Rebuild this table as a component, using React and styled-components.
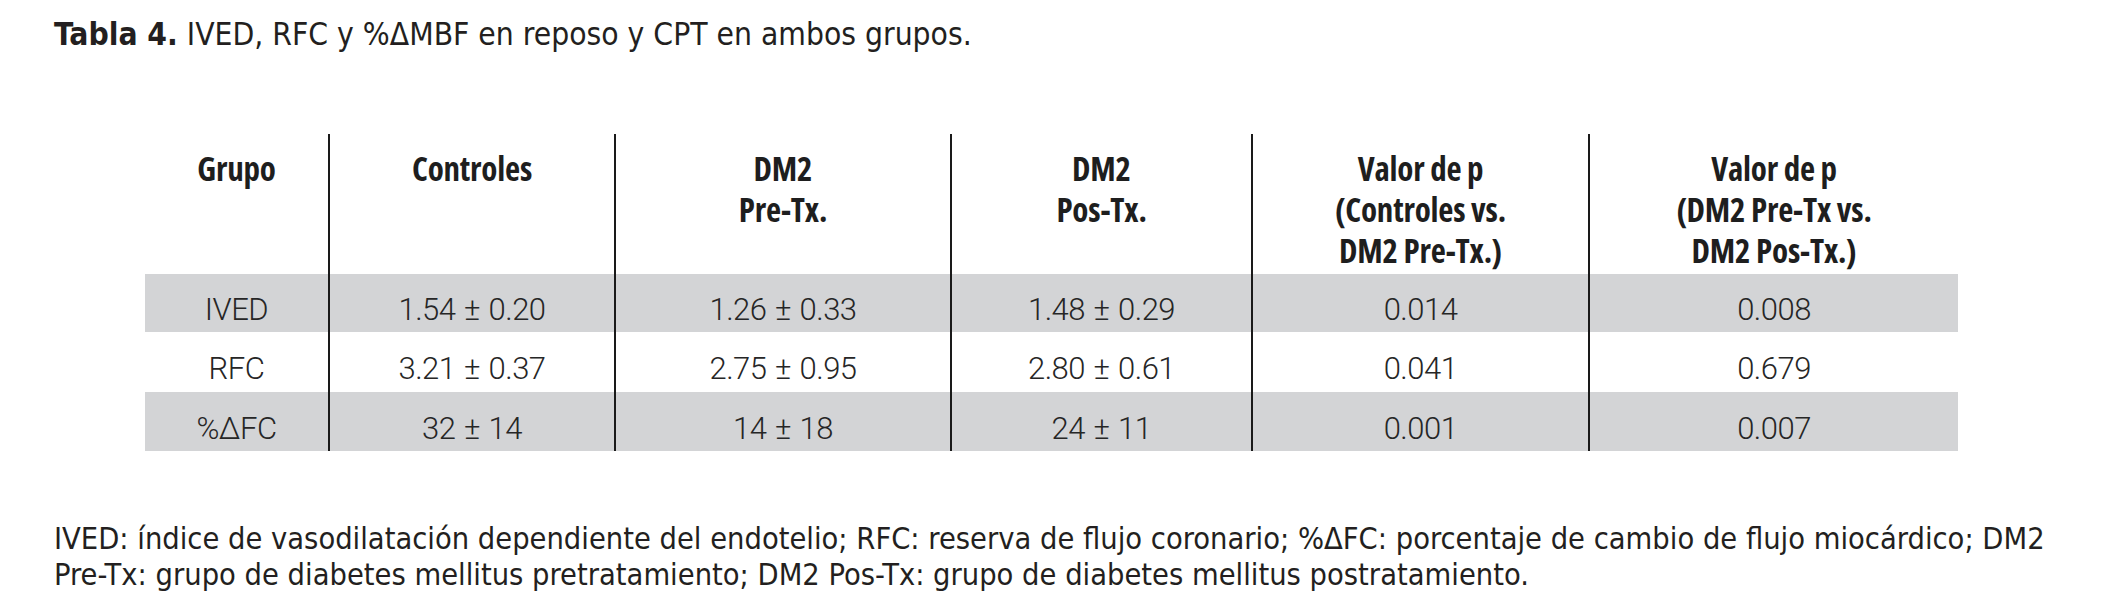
import React from 'react';
import styled, { createGlobalStyle } from 'styled-components';

const GlobalStyle = createGlobalStyle`
  html, body {
    margin: 0;
    padding: 0;
    background: #ffffff;
  }
`;

const Page = styled.div`
  width: 2104px;
  height: 616px;
  padding: 17px 0 0 54px;
  box-sizing: border-box;
  color: #231f20;
  font-family: "DejaVu Sans Condensed", "DejaVu Sans", sans-serif;
`;

const Caption = styled.h1`
  margin: 0;
  font-size: 31.5px;
  line-height: 34px;
  font-weight: normal;

  b {
    font-weight: bold;
  }
`;

const Table = styled.table`
  margin: 83px 0 0 91px;
  border-collapse: collapse;
  table-layout: fixed;
  color: #1e1e1e;
`;

const HeadCell = styled.th`
  width: ${(p) => p.$w}px;
  height: 140px;
  padding: 14px 0 0;
  box-sizing: border-box;
  vertical-align: top;
  text-align: center;
  font-family: "Open Sans", "Liberation Sans", sans-serif;
  font-size: 33px;
  line-height: 41px;
  font-weight: 700;
  font-stretch: 75%;
  letter-spacing: -0.2px;
  border-left: ${(p) => (p.$first ? 'none' : '2px solid #1a1a1a')};
`;

const Row = styled.tr`
  background: ${(p) => (p.$shaded ? '#d3d4d6' : '#ffffff')};
`;

const Cell = styled.td`
  height: ${(p) => p.$h}px;
  padding: 14px 0 0;
  box-sizing: border-box;
  text-align: center;
  vertical-align: middle;
  font-family: Roboto, "Liberation Sans", sans-serif;
  font-size: 31px;
  line-height: 40px;
  font-weight: 300;
  letter-spacing: -0.5px;
  word-spacing: 1.5px;
  color: #262626;
  border-left: ${(p) => (p.$first ? 'none' : '2px solid #1a1a1a')};
`;

const Notes = styled.p`
  margin: 70px 0 0;
  font-size: 30.5px;
  line-height: 36px;
`;

const columns = [
  { w: 184, label: ['Grupo'] },
  { w: 286, label: ['Controles'] },
  { w: 336, label: ['DM2', 'Pre-Tx.'] },
  { w: 301, label: ['DM2', 'Pos-Tx.'] },
  { w: 337, label: ['Valor de p', '(Controles vs.', 'DM2 Pre-Tx.)'] },
  { w: 369, label: ['Valor de p', '(DM2 Pre-Tx vs.', 'DM2 Pos-Tx.)'] },
];

const rows = [
  { h: 58, cells: ['IVED', '1.54 ± 0.20', '1.26 ± 0.33', '1.48 ± 0.29', '0.014', '0.008'] },
  { h: 60, cells: ['RFC', '3.21 ± 0.37', '2.75 ± 0.95', '2.80 ± 0.61', '0.041', '0.679'] },
  { h: 59, cells: ['%ΔFC', '32 ± 14', '14 ± 18', '24 ± 11', '0.001', '0.007'] },
];

export default function App() {
  return (
    <>
      <GlobalStyle />
      <Page>
        <Caption>
          <b>Tabla 4.</b> IVED, RFC y %ΔMBF en reposo y CPT en ambos grupos.
        </Caption>

        <Table>
          <thead>
            <tr>
              {columns.map((col, i) => (
                <HeadCell key={i} $w={col.w} $first={i === 0}>
                  {col.label.map((line, j) => (
                    <div key={j}>{line}</div>
                  ))}
                </HeadCell>
              ))}
            </tr>
          </thead>
          <tbody>
            {rows.map((row, i) => (
              <Row key={i} $shaded={i !== 1}>
                {row.cells.map((value, j) => (
                  <Cell key={j} $h={row.h} $first={j === 0}>
                    {value}
                  </Cell>
                ))}
              </Row>
            ))}
          </tbody>
        </Table>

        <Notes>
          IVED: índice de vasodilatación dependiente del endotelio; RFC: reserva de flujo coronario; %ΔFC: porcentaje de cambio de flujo miocárdico; DM2
          <br />
          Pre-Tx: grupo de diabetes mellitus pretratamiento; DM2 Pos-Tx: grupo de diabetes mellitus postratamiento.
        </Notes>
      </Page>
    </>
  );
}
